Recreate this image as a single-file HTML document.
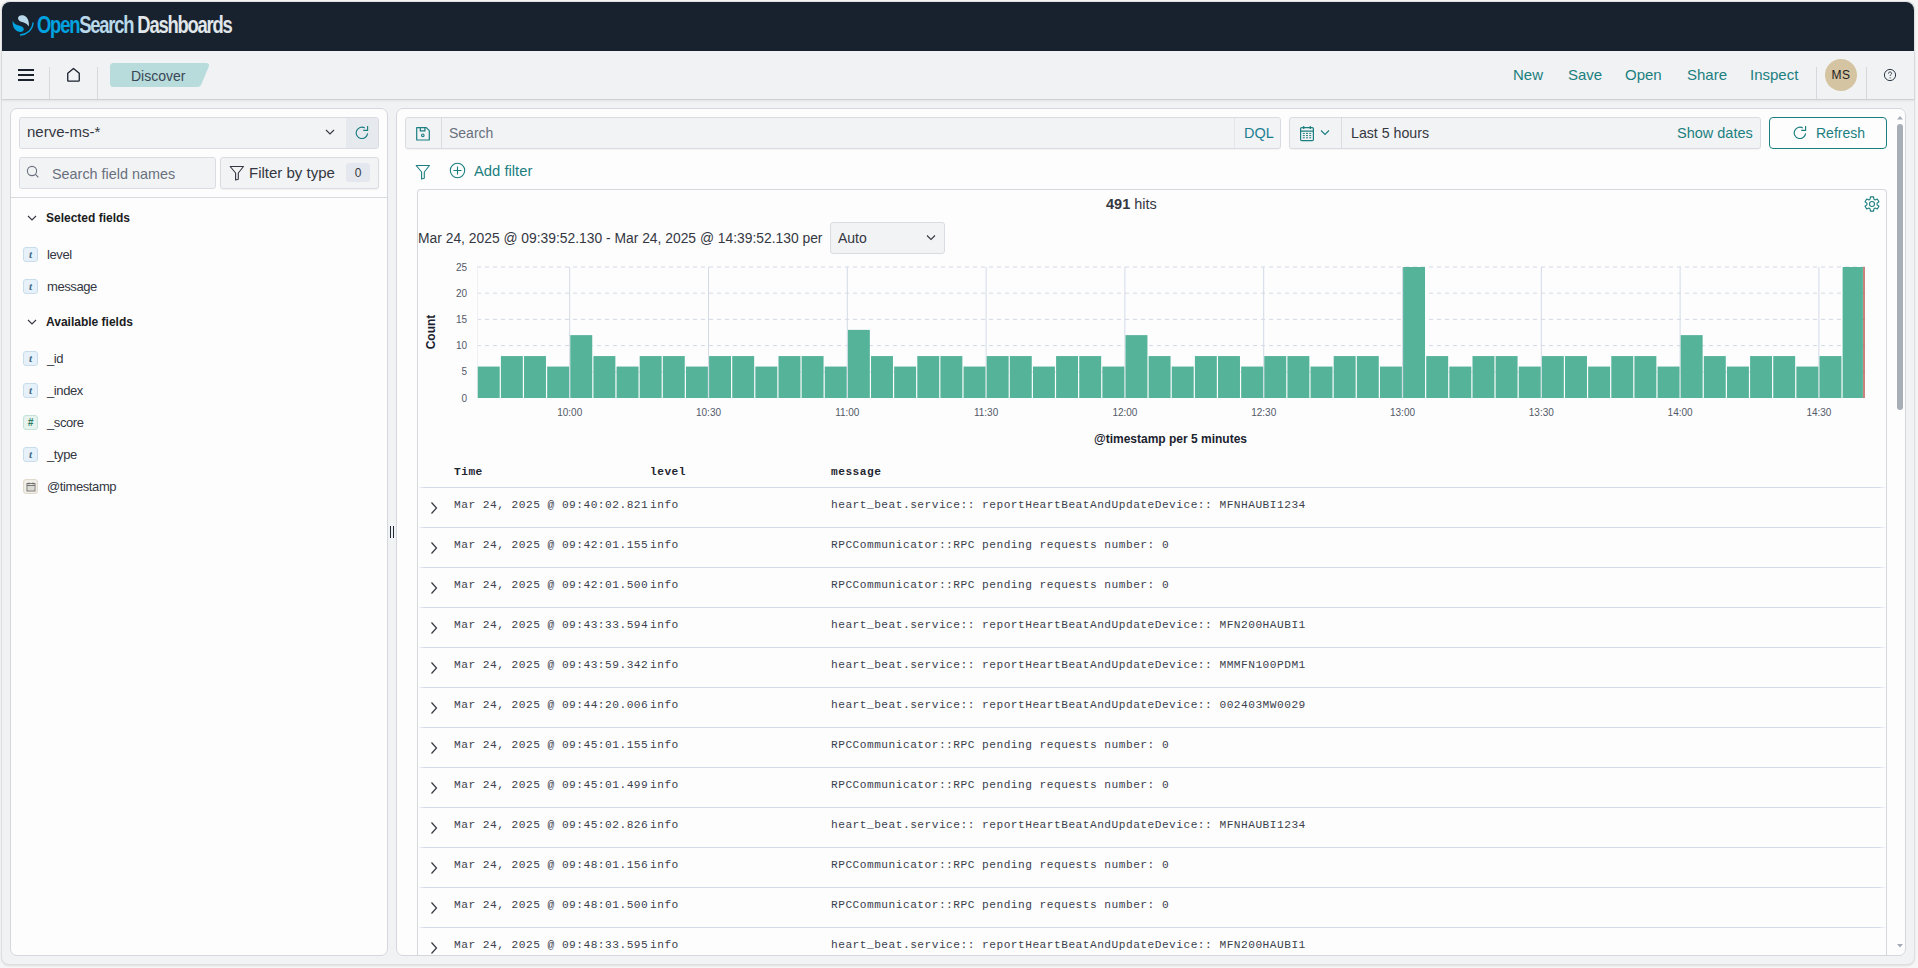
<!DOCTYPE html>
<html><head><meta charset="utf-8">
<style>
*{box-sizing:border-box;margin:0;padding:0}
html,body{width:1918px;height:968px;overflow:hidden;background:#F6F6F6;font-family:"Liberation Sans",sans-serif;color:#343741}
.a{position:absolute;white-space:nowrap}
#frame{position:absolute;left:1px;top:1px;width:1914px;height:964px;border-radius:8px;background:#F1F2F4;border:1px solid #DEDFE1;box-shadow:0 1px 2px rgba(0,0,0,.10)}
#hdr{position:absolute;left:2px;top:2px;width:1912px;height:49px;background:#18222E;border-radius:8px 8px 0 0}
#nav{position:absolute;left:2px;top:51px;width:1912px;height:48px;background:#F1F2F4;box-shadow:0 1px 1px rgba(0,0,0,.10),0 2px 3px rgba(0,0,0,.05)}
.panel{position:absolute;background:#FDFDFE;border:1px solid #D4D8DD;border-radius:7px}
.link{color:#1B7F80;font-size:15px}
.sep{position:absolute;width:1px;background:#D5D8DD}
.mono{font-family:"Liberation Mono",monospace}
.ax{font-family:"Liberation Sans",sans-serif;font-size:10px;fill:#535966}
.fld{position:absolute;left:47px;font-size:13px;letter-spacing:-.4px;color:#343741;margin-top:1px}
.ftk{position:absolute;left:23px;width:15px;height:15px;border-radius:3px;background:#E6F1FA;border:1px solid #C8DCEB;font-family:"Liberation Serif",serif;font-style:italic;font-weight:bold;font-size:11px;line-height:13px;text-align:center;color:#3F6A8C}
.sh{position:absolute;left:46px;font-size:12px;font-weight:bold;color:#1A1C21;margin-top:2px}
.row{position:absolute;left:419px;width:1467px;height:40px}
.row::after{content:"";position:absolute;left:0;right:0;bottom:0;height:1px;background:linear-gradient(90deg,rgba(211,218,230,.3),#D3DAE6 6px,#D3DAE6 calc(100% - 8px),rgba(211,218,230,.2))}
.row .chev{position:absolute;left:11px;top:12.5px}
.row span{position:absolute;top:11px;font-family:"Liberation Mono",monospace;font-size:11.2px;letter-spacing:.48px;color:#3B414C}
.row .c1{left:35px}.row .c2{left:231px}.row .c3{left:412px}
</style></head>
<body>
<div id="frame"></div>
<div id="hdr"></div>
<!-- logo -->
<svg class="a" style="left:0;top:0" width="40" height="40" viewBox="0 0 40 40">
  <path d="M18 18.5C17.8 15.5 21.5 14.5 24 15.5C27.5 17 29.5 21 28.8 26.5C27.5 24.3 25.5 23 23 22.3C20.3 21.6 18.2 20.5 18 18.5Z" fill="#B9D9EB"/>
  <path d="M12.8 20.5C12 25 14 30 18 31.5C21 32.5 23.5 31.5 23.8 29.5C24 27.5 22 26.5 19.5 25.8C16 25 13.5 23.5 12.8 20.5Z" fill="#00A3E0"/>
  <path d="M20.5 35C26.5 34.5 32.5 30 33 23" stroke="#00A3E0" stroke-width="1.4" fill="none" stroke-linecap="round"/>
</svg>
<div class="a" style="left:37px;top:11.5px;font-size:23px;font-weight:bold;letter-spacing:-1.5px;transform:scaleX(.8);transform-origin:0 0"><span style="color:#00A3E0">Open</span><span style="color:#B9D9EB">Search</span> <span style="color:#E0E6EA">Dashboards</span></div>

<div id="nav"></div>
<div class="a" style="left:18px;top:69px;width:16px;height:2px;background:#1A222E"></div>
<div class="a" style="left:18px;top:74px;width:16px;height:2px;background:#1A222E"></div>
<div class="a" style="left:18px;top:79px;width:16px;height:2px;background:#1A222E"></div>
<div class="sep" style="left:49px;top:67px;height:32px"></div>
<svg class="a" style="left:67px;top:67px" width="14" height="16" viewBox="0 0 14 16"><path d="M.75 6.3 6.5 1.5l5.75 4.8V13.4Q12.25 14.1 11.55 14.1H1.45Q.75 14.1 .75 13.4z" fill="none" stroke="#1A222E" stroke-width="1.3" stroke-linejoin="round"/></svg>
<div class="sep" style="left:97px;top:67px;height:32px"></div>
<svg class="a" style="left:110px;top:63px" width="100" height="24" viewBox="0 0 100 24"><path d="M3.5 0H96Q100 0 98.8 3.5L91.5 21Q90.5 24 87 24H3.5Q0 24 0 20.5V3.5Q0 0 3.5 0z" fill="#B8DCDC"/></svg>
<div class="a" style="left:131px;top:68px;font-size:14px;color:#3A4655">Discover</div>
<div class="a link" style="left:1513px;top:66px">New</div>
<div class="a link" style="left:1568px;top:66px">Save</div>
<div class="a link" style="left:1625px;top:66px">Open</div>
<div class="a link" style="left:1687px;top:66px">Share</div>
<div class="a link" style="left:1750px;top:66px">Inspect</div>
<div class="sep" style="left:1816px;top:67px;height:32px"></div>
<div class="a" style="left:1825px;top:59px;width:32px;height:32px;border-radius:50%;background:#D5C4A1;color:#1A1C21;font-size:12px;letter-spacing:.5px;text-align:center;line-height:32px">MS</div>
<div class="sep" style="left:1866px;top:67px;height:32px"></div>
<svg class="a" style="left:1883px;top:68px" width="14" height="14" viewBox="0 0 14 14"><circle cx="7" cy="7" r="5.6" fill="none" stroke="#2F3A47" stroke-width="1"/><path d="M5.4 5.6c0-1 .7-1.6 1.6-1.6s1.6.6 1.6 1.5c0 1.2-1.5 1.1-1.5 2.4" fill="none" stroke="#2F3A47" stroke-width="1"/><circle cx="7.1" cy="9.8" r=".6" fill="#2F3A47"/></svg>

<!-- SIDEBAR -->
<div class="panel" style="left:10px;top:108px;width:378px;height:848px"></div>
<!-- index pattern -->
<div class="a" style="left:19px;top:117px;width:360px;height:32px;background:#F2F3F5;border:1px solid #D9DDE2;border-radius:3px"></div>
<div class="a" style="left:346px;top:118px;width:32px;height:30px;background:#E6E9EE;border-radius:0 2px 2px 0"></div>
<div class="a" style="left:27px;top:123px;font-size:15px;color:#343741">nerve-ms-*</div>
<svg class="a" style="left:325px;top:128px" width="10" height="8" viewBox="0 0 10 8"><path d="M1 2l4 4 4-4" fill="none" stroke="#343741" stroke-width="1.1"/></svg>
<svg class="a" style="left:355px;top:125px" width="14" height="14" viewBox="0 0 14 14"><path d="M12.6 8.4A5.7 5.7 0 1 1 9.75 2.96" fill="none" stroke="#1B7F80" stroke-width="1.15"/><path d="M12.6 1.1V5.4H8.2" fill="none" stroke="#1B7F80" stroke-width="1.15"/></svg>
<!-- search field names -->
<div class="a" style="left:19px;top:157px;width:197px;height:32px;background:#F2F3F5;border:1px solid #D9DDE2;border-radius:3px"></div>
<svg class="a" style="left:26px;top:165px" width="14" height="14" viewBox="0 0 14 14"><circle cx="6" cy="6" r="4.6" fill="none" stroke="#69707D" stroke-width="1.1"/><path d="M9.4 9.4l3 3" stroke="#69707D" stroke-width="1.1"/></svg>
<div class="a" style="left:52px;top:165.5px;font-size:14.4px;color:#69707D">Search field names</div>
<!-- filter by type -->
<div class="a" style="left:220px;top:157px;width:159px;height:32px;background:#F2F3F5;border:1px solid #D9DDE2;border-radius:3px;box-shadow:0 1px 2px rgba(0,0,0,.06)"></div>
<svg class="a" style="left:229px;top:165px" width="16" height="16" viewBox="0 0 16 16"><path d="M1.2 1.5h13.3L9.3 8v6.2L6.6 15V8z" fill="none" stroke="#343741" stroke-width="1.1" stroke-linejoin="round"/></svg>
<div class="a" style="left:249px;top:164px;font-size:15px;color:#343741">Filter by type</div>
<div class="a" style="left:346px;top:163px;width:24px;height:19px;background:#E4E8EE;border-radius:3px;font-size:12px;text-align:center;line-height:21px;color:#343741">0</div>
<!-- divider -->
<div class="a" style="left:11px;top:197px;width:376px;height:1px;background:#D6D9DE"></div>
<!-- selected fields -->
<svg class="a" style="left:27px;top:214px" width="10" height="8" viewBox="0 0 10 8"><path d="M1 2l4 4 4-4" fill="none" stroke="#343741" stroke-width="1.1"/></svg>
<div class="sh" style="top:209px">Selected fields</div>
<div class="ftk" style="top:247px">t</div><div class="fld" style="top:246px">level</div>
<div class="ftk" style="top:279px">t</div><div class="fld" style="top:278px">message</div>
<svg class="a" style="left:27px;top:318px" width="10" height="8" viewBox="0 0 10 8"><path d="M1 2l4 4 4-4" fill="none" stroke="#343741" stroke-width="1.1"/></svg>
<div class="sh" style="top:313px">Available fields</div>
<div class="ftk" style="top:351px">t</div><div class="fld" style="top:350px">_id</div>
<div class="ftk" style="top:383px">t</div><div class="fld" style="top:382px">_index</div>
<div class="ftk" style="top:415px;background:#E6F3EE;border-color:#C5E2D6;color:#2E7D63;font-family:'Liberation Sans',sans-serif;font-size:10px">#</div><div class="fld" style="top:414px">_score</div>
<div class="ftk" style="top:447px">t</div><div class="fld" style="top:446px">_type</div>
<div class="ftk" style="top:479px;background:#F1EEE8;border-color:#E0DACD"></div>
<svg class="a" style="left:26px;top:482px" width="10" height="10" viewBox="0 0 10 10"><rect x="1" y="1.5" width="8" height="7.5" fill="none" stroke="#6A6A6A" stroke-width=".9"/><path d="M1 3.5h8M3 .5v2M7 .5v2" stroke="#6A6A6A" stroke-width=".9"/><path d="M2.5 5h1M4.5 5h1M6.5 5h1M2.5 7h1M4.5 7h1M6.5 7h1" stroke="#8A8A8A" stroke-width=".8"/></svg>
<div class="fld" style="top:478px">@timestamp</div>
<!-- resize handle -->
<div class="a" style="left:390px;top:526px;width:1px;height:12px;background:#1F2D3B"></div>
<div class="a" style="left:393px;top:526px;width:1px;height:12px;background:#1F2D3B"></div>


<!-- MAIN -->
<div class="panel" style="left:396px;top:108px;width:1510px;height:848px"></div>
<!-- query bar -->
<div class="a" style="left:405px;top:117px;width:876px;height:32px;background:#F2F3F5;border:1px solid #D9DDE2;border-radius:3px;box-shadow:0 1px 1px rgba(0,0,0,.04)"></div>
<div class="sep" style="left:441px;top:118px;height:30px;background:#D9DDE2"></div>
<div class="sep" style="left:1234px;top:118px;height:30px;background:#E3E7ED"></div>
<svg class="a" style="left:415px;top:126px" width="16" height="16" viewBox="0 0 16 16"><path d="M1.7 1.6h9.6l3 3v9.4H1.7z" fill="none" stroke="#1B7F80" stroke-width="1.2" stroke-linejoin="round"/><path d="M5.3 1.6v3.2h4.6V1.6" fill="none" stroke="#1B7F80" stroke-width="1.2"/><circle cx="7.8" cy="9.3" r="1.3" fill="none" stroke="#1B7F80" stroke-width="1.1"/></svg>
<div class="a" style="left:449px;top:124.5px;font-size:14px;color:#69707D">Search</div>
<div class="a link" style="left:1244px;top:125px;font-size:14.5px;color:#1D7F93">DQL</div>
<!-- date picker -->
<div class="a" style="left:1289px;top:117px;width:472px;height:32px;background:#F2F3F5;border:1px solid #D9DDE2;border-radius:3px;box-shadow:0 1px 1px rgba(0,0,0,.04)"></div>
<div class="sep" style="left:1341px;top:118px;height:30px;background:#D9DDE2"></div>
<svg class="a" style="left:1299px;top:125px" width="16" height="17" viewBox="0 0 16 17"><rect x="1.6" y="2.6" width="12.8" height="13" rx="1.2" fill="none" stroke="#1B7F80" stroke-width="1.2"/><path d="M1.6 6.2h12.8M4.7 1v3M11.3 1v3" stroke="#1B7F80" stroke-width="1.2"/><path d="M3.8 8.4h2M7 8.4h2M10.2 8.4h2M3.8 10.6h2M7 10.6h2M10.2 10.6h2M3.8 12.8h2M7 12.8h2M10.2 12.8h2" stroke="#1B7F80" stroke-width="1"/></svg>
<svg class="a" style="left:1320px;top:129px" width="10" height="8" viewBox="0 0 10 8"><path d="M1 1.5l4 4 4-4" fill="none" stroke="#1B7F80" stroke-width="1.1"/></svg>
<div class="a" style="left:1351px;top:125px;font-size:14.2px;color:#343741">Last 5 hours</div>
<div class="a link" style="left:1677px;top:125px;font-size:14.5px">Show dates</div>
<!-- refresh -->
<div class="a" style="left:1769px;top:117px;width:118px;height:32px;background:#FDFDFE;border:1px solid #1B7F80;border-radius:4px"></div>
<svg class="a" style="left:1793px;top:125px" width="14" height="14" viewBox="0 0 14 14"><path d="M12.6 8.4A5.7 5.7 0 1 1 9.75 2.96" fill="none" stroke="#1B7F80" stroke-width="1.15"/><path d="M12.6 1.1V5.4H8.2" fill="none" stroke="#1B7F80" stroke-width="1.15"/></svg>
<div class="a link" style="left:1816px;top:125px;font-size:14px">Refresh</div>
<!-- filter row -->
<svg class="a" style="left:415px;top:164px" width="16" height="16" viewBox="0 0 16 16"><path d="M1.2 1.5h13.3L9.3 8v6.2L6.6 15V8z" fill="none" stroke="#1B7F80" stroke-width="1.1" stroke-linejoin="round"/></svg>
<svg class="a" style="left:449px;top:162px" width="17" height="17" viewBox="0 0 17 17"><circle cx="8.5" cy="8.5" r="7.2" fill="none" stroke="#1B7F80" stroke-width="1.1"/><path d="M8.5 4.5v8M4.5 8.5h8" stroke="#1B7F80" stroke-width="1.1"/></svg>
<div class="a link" style="left:474px;top:162.5px;font-size:14.8px">Add filter</div>
<!-- results container -->
<div class="a" style="left:417px;top:189px;width:1470px;height:766px;border:1px solid #D4D8DD;border-bottom:none;border-radius:4px 4px 0 0;background:#FDFDFE"></div>
<div class="a" style="left:1106px;top:195.5px;font-size:14.5px;color:#343741"><b>491</b> hits</div>
<svg class="a" style="left:1863px;top:195px" width="18" height="18" viewBox="0 0 18 18"><path d="M11.45 4.76 L10.85 3.93 L10.64 1.89 L7.36 1.89 L7.15 3.93 L6.55 4.76 L5.53 4.86 L3.66 4.02 L2.02 6.87 L3.68 8.06 L4.10 9.00 L3.68 9.94 L2.02 11.13 L3.66 13.98 L5.53 13.14 L6.55 13.24 L7.15 14.07 L7.36 16.11 L10.64 16.11 L10.85 14.07 L11.45 13.24 L12.47 13.14 L14.34 13.98 L15.98 11.13 L14.32 9.94 L13.90 9.00 L14.32 8.06 L15.98 6.87 L14.34 4.02 L12.47 4.86Z" fill="none" stroke="#1B7F80" stroke-width="1.1" stroke-linejoin="round"/><circle cx="9" cy="9" r="2.5" fill="none" stroke="#1B7F80" stroke-width="1.1"/></svg>
<div class="a" style="left:418px;top:229.5px;font-size:13.85px;color:#343741">Mar 24, 2025 @ 09:39:52.130 - Mar 24, 2025 @ 14:39:52.130 per</div>
<div class="a" style="left:830px;top:222px;width:115px;height:32px;background:#F2F3F5;border:1px solid #D9DDE2;border-radius:3px"></div>
<div class="a" style="left:838px;top:230px;font-size:14px;color:#343741">Auto</div>
<svg class="a" style="left:926px;top:234px" width="10" height="8" viewBox="0 0 10 8"><path d="M1 1.5l4 4 4-4" fill="none" stroke="#343741" stroke-width="1.1"/></svg>
<!-- chart -->
<svg class="a" style="left:0;top:0" width="1918" height="460" viewBox="0 0 1918 460">
<line x1="477" x2="1865" y1="267.0" y2="267.0" stroke="#D3DAE6" stroke-width="1" stroke-dasharray="4 4"/>
<line x1="477" x2="1865" y1="293.2" y2="293.2" stroke="#D3DAE6" stroke-width="1" stroke-dasharray="4 4"/>
<line x1="477" x2="1865" y1="319.4" y2="319.4" stroke="#D3DAE6" stroke-width="1" stroke-dasharray="4 4"/>
<line x1="477" x2="1865" y1="345.6" y2="345.6" stroke="#D3DAE6" stroke-width="1" stroke-dasharray="4 4"/>
<line x1="477" x2="1865" y1="371.8" y2="371.8" stroke="#D3DAE6" stroke-width="1" stroke-dasharray="4 4"/>
<line x1="569.7" x2="569.7" y1="267" y2="398" stroke="#D3DAE6" stroke-width="1"/>
<line x1="708.5" x2="708.5" y1="267" y2="398" stroke="#D3DAE6" stroke-width="1"/>
<line x1="847.3" x2="847.3" y1="267" y2="398" stroke="#D3DAE6" stroke-width="1"/>
<line x1="986.1" x2="986.1" y1="267" y2="398" stroke="#D3DAE6" stroke-width="1"/>
<line x1="1124.9" x2="1124.9" y1="267" y2="398" stroke="#D3DAE6" stroke-width="1"/>
<line x1="1263.7" x2="1263.7" y1="267" y2="398" stroke="#D3DAE6" stroke-width="1"/>
<line x1="1402.5" x2="1402.5" y1="267" y2="398" stroke="#D3DAE6" stroke-width="1"/>
<line x1="1541.3" x2="1541.3" y1="267" y2="398" stroke="#D3DAE6" stroke-width="1"/>
<line x1="1680.1" x2="1680.1" y1="267" y2="398" stroke="#D3DAE6" stroke-width="1"/>
<line x1="1818.9" x2="1818.9" y1="267" y2="398" stroke="#D3DAE6" stroke-width="1"/>
<line x1="477.5" x2="477.5" y1="267" y2="398" stroke="#EEF0F3" stroke-width="1"/>
<rect x="477.77" y="366.56" width="21.93" height="31.44" fill="#54B399"/>
<rect x="500.90" y="356.08" width="21.93" height="41.92" fill="#54B399"/>
<rect x="524.03" y="356.08" width="21.93" height="41.92" fill="#54B399"/>
<rect x="547.17" y="366.56" width="21.93" height="31.44" fill="#54B399"/>
<rect x="570.30" y="335.12" width="21.93" height="62.88" fill="#54B399"/>
<rect x="593.43" y="356.08" width="21.93" height="41.92" fill="#54B399"/>
<rect x="616.57" y="366.56" width="21.93" height="31.44" fill="#54B399"/>
<rect x="639.70" y="356.08" width="21.93" height="41.92" fill="#54B399"/>
<rect x="662.83" y="356.08" width="21.93" height="41.92" fill="#54B399"/>
<rect x="685.97" y="366.56" width="21.93" height="31.44" fill="#54B399"/>
<rect x="709.10" y="356.08" width="21.93" height="41.92" fill="#54B399"/>
<rect x="732.23" y="356.08" width="21.93" height="41.92" fill="#54B399"/>
<rect x="755.37" y="366.56" width="21.93" height="31.44" fill="#54B399"/>
<rect x="778.50" y="356.08" width="21.93" height="41.92" fill="#54B399"/>
<rect x="801.63" y="356.08" width="21.93" height="41.92" fill="#54B399"/>
<rect x="824.77" y="366.56" width="21.93" height="31.44" fill="#54B399"/>
<rect x="847.90" y="329.88" width="21.93" height="68.12" fill="#54B399"/>
<rect x="871.03" y="356.08" width="21.93" height="41.92" fill="#54B399"/>
<rect x="894.17" y="366.56" width="21.93" height="31.44" fill="#54B399"/>
<rect x="917.30" y="356.08" width="21.93" height="41.92" fill="#54B399"/>
<rect x="940.43" y="356.08" width="21.93" height="41.92" fill="#54B399"/>
<rect x="963.57" y="366.56" width="21.93" height="31.44" fill="#54B399"/>
<rect x="986.70" y="356.08" width="21.93" height="41.92" fill="#54B399"/>
<rect x="1009.83" y="356.08" width="21.93" height="41.92" fill="#54B399"/>
<rect x="1032.97" y="366.56" width="21.93" height="31.44" fill="#54B399"/>
<rect x="1056.10" y="356.08" width="21.93" height="41.92" fill="#54B399"/>
<rect x="1079.23" y="356.08" width="21.93" height="41.92" fill="#54B399"/>
<rect x="1102.37" y="366.56" width="21.93" height="31.44" fill="#54B399"/>
<rect x="1125.50" y="335.12" width="21.93" height="62.88" fill="#54B399"/>
<rect x="1148.63" y="356.08" width="21.93" height="41.92" fill="#54B399"/>
<rect x="1171.77" y="366.56" width="21.93" height="31.44" fill="#54B399"/>
<rect x="1194.90" y="356.08" width="21.93" height="41.92" fill="#54B399"/>
<rect x="1218.03" y="356.08" width="21.93" height="41.92" fill="#54B399"/>
<rect x="1241.17" y="366.56" width="21.93" height="31.44" fill="#54B399"/>
<rect x="1264.30" y="356.08" width="21.93" height="41.92" fill="#54B399"/>
<rect x="1287.43" y="356.08" width="21.93" height="41.92" fill="#54B399"/>
<rect x="1310.57" y="366.56" width="21.93" height="31.44" fill="#54B399"/>
<rect x="1333.70" y="356.08" width="21.93" height="41.92" fill="#54B399"/>
<rect x="1356.83" y="356.08" width="21.93" height="41.92" fill="#54B399"/>
<rect x="1379.97" y="366.56" width="21.93" height="31.44" fill="#54B399"/>
<rect x="1403.10" y="267.00" width="21.93" height="131.00" fill="#54B399"/>
<rect x="1426.23" y="356.08" width="21.93" height="41.92" fill="#54B399"/>
<rect x="1449.37" y="366.56" width="21.93" height="31.44" fill="#54B399"/>
<rect x="1472.50" y="356.08" width="21.93" height="41.92" fill="#54B399"/>
<rect x="1495.63" y="356.08" width="21.93" height="41.92" fill="#54B399"/>
<rect x="1518.77" y="366.56" width="21.93" height="31.44" fill="#54B399"/>
<rect x="1541.90" y="356.08" width="21.93" height="41.92" fill="#54B399"/>
<rect x="1565.03" y="356.08" width="21.93" height="41.92" fill="#54B399"/>
<rect x="1588.17" y="366.56" width="21.93" height="31.44" fill="#54B399"/>
<rect x="1611.30" y="356.08" width="21.93" height="41.92" fill="#54B399"/>
<rect x="1634.43" y="356.08" width="21.93" height="41.92" fill="#54B399"/>
<rect x="1657.57" y="366.56" width="21.93" height="31.44" fill="#54B399"/>
<rect x="1680.70" y="335.12" width="21.93" height="62.88" fill="#54B399"/>
<rect x="1703.83" y="356.08" width="21.93" height="41.92" fill="#54B399"/>
<rect x="1726.97" y="366.56" width="21.93" height="31.44" fill="#54B399"/>
<rect x="1750.10" y="356.08" width="21.93" height="41.92" fill="#54B399"/>
<rect x="1773.23" y="356.08" width="21.93" height="41.92" fill="#54B399"/>
<rect x="1796.37" y="366.56" width="21.93" height="31.44" fill="#54B399"/>
<rect x="1819.50" y="356.08" width="21.93" height="41.92" fill="#54B399"/>
<rect x="1842.63" y="267.00" width="20.27" height="131.00" fill="#54B399"/>
<rect x="1863.2" y="267" width="1.6" height="131" fill="#B04A40" opacity="0.85"/>
<text x="569.7" y="416" text-anchor="middle" class="ax">10:00</text>
<text x="708.5" y="416" text-anchor="middle" class="ax">10:30</text>
<text x="847.3" y="416" text-anchor="middle" class="ax">11:00</text>
<text x="986.1" y="416" text-anchor="middle" class="ax">11:30</text>
<text x="1124.9" y="416" text-anchor="middle" class="ax">12:00</text>
<text x="1263.7" y="416" text-anchor="middle" class="ax">12:30</text>
<text x="1402.5" y="416" text-anchor="middle" class="ax">13:00</text>
<text x="1541.3" y="416" text-anchor="middle" class="ax">13:30</text>
<text x="1680.1" y="416" text-anchor="middle" class="ax">14:00</text>
<text x="1818.9" y="416" text-anchor="middle" class="ax">14:30</text>
<text x="467" y="401.5" text-anchor="end" class="ax">0</text>
<text x="467" y="375.3" text-anchor="end" class="ax">5</text>
<text x="467" y="349.1" text-anchor="end" class="ax">10</text>
<text x="467" y="322.9" text-anchor="end" class="ax">15</text>
<text x="467" y="296.7" text-anchor="end" class="ax">20</text>
<text x="467" y="270.5" text-anchor="end" class="ax">25</text>
<text x="0" y="0" transform="translate(435 332) rotate(-90)" text-anchor="middle" font-family="Liberation Sans" font-weight="bold" font-size="12" fill="#1A222E">Count</text>
<text x="1170.5" y="443" text-anchor="middle" font-family="Liberation Sans" font-weight="bold" font-size="12" fill="#1A222E">@timestamp per 5 minutes</text>
</svg>
<!-- table -->
<div class="a" style="left:454px;top:466px;font-family:'Liberation Mono',monospace;font-weight:bold;font-size:11.2px;letter-spacing:.48px;color:#1F2630">Time</div>
<div class="a" style="left:650px;top:466px;font-family:'Liberation Mono',monospace;font-weight:bold;font-size:11.2px;letter-spacing:.48px;color:#1F2630">level</div>
<div class="a" style="left:831px;top:466px;font-family:'Liberation Mono',monospace;font-weight:bold;font-size:11.2px;letter-spacing:.48px;color:#1F2630">message</div>
<div class="a" style="left:419px;top:487px;width:1467px;height:1px;background:linear-gradient(90deg,rgba(211,218,230,.3),#D3DAE6 6px,#D3DAE6 calc(100% - 8px),rgba(211,218,230,.2))"></div>
<div class="a" style="left:0;top:488px;width:1918px;height:467px;overflow:hidden">
<div class="row" style="top:0px"><svg class="chev" width="8" height="14" viewBox="0 0 8 14"><path d="M1.5 1.5 6.5 7l-5 5.5" fill="none" stroke="#343741" stroke-width="1.2"/></svg><span class="c1">Mar 24, 2025 @ 09:40:02.821</span><span class="c2">info</span><span class="c3">heart_beat.service:: reportHeartBeatAndUpdateDevice:: MFNHAUBI1234</span></div>
<div class="row" style="top:40px"><svg class="chev" width="8" height="14" viewBox="0 0 8 14"><path d="M1.5 1.5 6.5 7l-5 5.5" fill="none" stroke="#343741" stroke-width="1.2"/></svg><span class="c1">Mar 24, 2025 @ 09:42:01.155</span><span class="c2">info</span><span class="c3">RPCCommunicator::RPC pending requests number: 0</span></div>
<div class="row" style="top:80px"><svg class="chev" width="8" height="14" viewBox="0 0 8 14"><path d="M1.5 1.5 6.5 7l-5 5.5" fill="none" stroke="#343741" stroke-width="1.2"/></svg><span class="c1">Mar 24, 2025 @ 09:42:01.500</span><span class="c2">info</span><span class="c3">RPCCommunicator::RPC pending requests number: 0</span></div>
<div class="row" style="top:120px"><svg class="chev" width="8" height="14" viewBox="0 0 8 14"><path d="M1.5 1.5 6.5 7l-5 5.5" fill="none" stroke="#343741" stroke-width="1.2"/></svg><span class="c1">Mar 24, 2025 @ 09:43:33.594</span><span class="c2">info</span><span class="c3">heart_beat.service:: reportHeartBeatAndUpdateDevice:: MFN200HAUBI1</span></div>
<div class="row" style="top:160px"><svg class="chev" width="8" height="14" viewBox="0 0 8 14"><path d="M1.5 1.5 6.5 7l-5 5.5" fill="none" stroke="#343741" stroke-width="1.2"/></svg><span class="c1">Mar 24, 2025 @ 09:43:59.342</span><span class="c2">info</span><span class="c3">heart_beat.service:: reportHeartBeatAndUpdateDevice:: MMMFN100PDM1</span></div>
<div class="row" style="top:200px"><svg class="chev" width="8" height="14" viewBox="0 0 8 14"><path d="M1.5 1.5 6.5 7l-5 5.5" fill="none" stroke="#343741" stroke-width="1.2"/></svg><span class="c1">Mar 24, 2025 @ 09:44:20.006</span><span class="c2">info</span><span class="c3">heart_beat.service:: reportHeartBeatAndUpdateDevice:: 002403MW0029</span></div>
<div class="row" style="top:240px"><svg class="chev" width="8" height="14" viewBox="0 0 8 14"><path d="M1.5 1.5 6.5 7l-5 5.5" fill="none" stroke="#343741" stroke-width="1.2"/></svg><span class="c1">Mar 24, 2025 @ 09:45:01.155</span><span class="c2">info</span><span class="c3">RPCCommunicator::RPC pending requests number: 0</span></div>
<div class="row" style="top:280px"><svg class="chev" width="8" height="14" viewBox="0 0 8 14"><path d="M1.5 1.5 6.5 7l-5 5.5" fill="none" stroke="#343741" stroke-width="1.2"/></svg><span class="c1">Mar 24, 2025 @ 09:45:01.499</span><span class="c2">info</span><span class="c3">RPCCommunicator::RPC pending requests number: 0</span></div>
<div class="row" style="top:320px"><svg class="chev" width="8" height="14" viewBox="0 0 8 14"><path d="M1.5 1.5 6.5 7l-5 5.5" fill="none" stroke="#343741" stroke-width="1.2"/></svg><span class="c1">Mar 24, 2025 @ 09:45:02.826</span><span class="c2">info</span><span class="c3">heart_beat.service:: reportHeartBeatAndUpdateDevice:: MFNHAUBI1234</span></div>
<div class="row" style="top:360px"><svg class="chev" width="8" height="14" viewBox="0 0 8 14"><path d="M1.5 1.5 6.5 7l-5 5.5" fill="none" stroke="#343741" stroke-width="1.2"/></svg><span class="c1">Mar 24, 2025 @ 09:48:01.156</span><span class="c2">info</span><span class="c3">RPCCommunicator::RPC pending requests number: 0</span></div>
<div class="row" style="top:400px"><svg class="chev" width="8" height="14" viewBox="0 0 8 14"><path d="M1.5 1.5 6.5 7l-5 5.5" fill="none" stroke="#343741" stroke-width="1.2"/></svg><span class="c1">Mar 24, 2025 @ 09:48:01.500</span><span class="c2">info</span><span class="c3">RPCCommunicator::RPC pending requests number: 0</span></div>
<div class="row" style="top:440px"><svg class="chev" width="8" height="14" viewBox="0 0 8 14"><path d="M1.5 1.5 6.5 7l-5 5.5" fill="none" stroke="#343741" stroke-width="1.2"/></svg><span class="c1">Mar 24, 2025 @ 09:48:33.595</span><span class="c2">info</span><span class="c3">heart_beat.service:: reportHeartBeatAndUpdateDevice:: MFN200HAUBI1</span></div>
</div>
<!-- scrollbar -->
<svg class="a" style="left:1894px;top:112px" width="12" height="10" viewBox="0 0 12 10"><path d="M3 7.5h6L6 4z" fill="#A5ACB5"/></svg>
<div class="a" style="left:1897px;top:124px;width:6px;height:286px;border-radius:3px;background:#A8AEB6"></div>
<svg class="a" style="left:1894px;top:941px" width="12" height="10" viewBox="0 0 12 10"><path d="M3 3h6L6 6.5z" fill="#A5ACB5"/></svg>

</body></html>
